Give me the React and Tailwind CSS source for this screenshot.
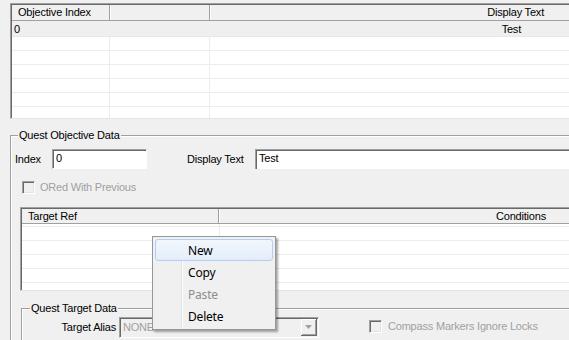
import React from 'react'

const sans = { fontFamily: '"Liberation Sans", Arial, sans-serif' }

function Checkbox() {
  return (
    <div className="w-[13px] h-[13px] shrink-0 border-t border-l border-t-[#a0a0a0] border-l-[#a0a0a0] border-b border-r border-b-white border-r-white shadow-[inset_1px_1px_0_#696969,inset_-1px_-1px_0_#e3e3e3] bg-[#f0f0f0]" />
  )
}

function TopList() {
  const rows = [0, 1, 2, 3, 4]
  return (
    <div className="ml-[10px] mt-[3px] h-[116px] w-[640px] border-t border-l border-t-[#a0a0a0] border-l-[#a0a0a0] border-b border-b-[#e3e3e3] shadow-[inset_1px_1px_0_#696969] bg-white flex flex-col pt-[1px] pl-[1px]">
      <div className="h-[16px] shrink-0 flex bg-[#f0f0f0] border-b border-b-[#a0a0a0]">
        <div className="w-[98px] shrink-0 pl-[6px] leading-[15px] border-r border-r-[#a0a0a0] shadow-[1px_0_0_#fff]">Objective Index</div>
        <div className="w-[100px] shrink-0 border-r border-r-[#a0a0a0] shadow-[1px_0_0_#fff]" />
        <div className="w-[334px] shrink-0 text-right leading-[15px]">Display Text</div>
      </div>
      <div className="h-[16px] shrink-0 flex bg-[#efefef] border-b border-b-[#e8e8e8] leading-[16px]">
        <div className="w-[98px] shrink-0 pl-[2px]">0</div>
        <div className="w-[100px] shrink-0" />
        <div className="w-[311px] shrink-0 text-right">Test</div>
      </div>
      {rows.map(r => (
        <div key={r} className="h-[14px] shrink-0 flex border-b border-b-[#ececec]">
          <div className="w-[98px] shrink-0 border-r border-r-[#ececec]" />
          <div className="w-[100px] shrink-0 border-r border-r-[#ececec]" />
          <div className="flex-1" />
        </div>
      ))}
      <div className="flex-1 flex">
        <div className="w-[98px] shrink-0 border-r border-r-[#ececec]" />
        <div className="w-[100px] shrink-0 border-r border-r-[#ececec]" />
      </div>
    </div>
  )
}

function TargetList() {
  return (
    <div className="ml-[9px] mt-[13px] h-[84px] w-[600px] border-t border-l border-t-[#a0a0a0] border-l-[#a0a0a0] border-b border-b-[#e3e3e3] shadow-[inset_1px_1px_0_#696969] bg-white flex flex-col pt-[1px] pl-[1px]">
      <div className="h-[15px] shrink-0 flex bg-[#f0f0f0] border-b border-b-[#a0a0a0]">
        <div className="w-[197px] shrink-0 pl-[6px] leading-[14px] border-r border-r-[#a0a0a0] shadow-[1px_0_0_#fff]">Target Ref</div>
        <div className="w-[327px] shrink-0 text-right leading-[14px]">Conditions</div>
      </div>
      <div className="h-[3px] shrink-0 flex border-b border-b-[#ececec]">
        <div className="w-[198px] shrink-0 border-r border-r-[#ececec]" />
      </div>
      {[0, 1, 2, 3].map(r => (
        <div key={r} className="h-[14px] shrink-0 flex border-b border-b-[#ececec]">
          <div className="w-[198px] shrink-0 border-r border-r-[#ececec]" />
        </div>
      ))}
      <div className="flex-1 flex">
        <div className="w-[198px] shrink-0 border-r border-r-[#ececec]" />
      </div>
    </div>
  )
}

function ContextMenu() {
  const items = [
    { label: 'New', active: true },
    { label: 'Copy' },
    { label: 'Paste', disabled: true },
    { label: 'Delete' },
  ]
  return (
    <div
      className="absolute left-[152px] top-[236px] w-[124px] h-[94px] bg-[#f0f0f0] border border-[#979797] shadow-[2px_2px_2px_rgba(0,0,0,0.35)] px-[2px] pt-[2px]"
      style={{ fontFamily: '"Noto Sans", "Open Sans", sans-serif' }}
    >
      <div className="absolute left-[28px] top-[2px] bottom-[2px] w-[2px] border-l border-l-[#e2e3e3] border-r border-r-white" />
      {items.map(it => (
        <div
          key={it.label}
          className={
            'relative h-[22px] leading-[21px] pl-[32px] text-[12px] rounded-[3px] border ' +
            (it.active
              ? 'border-[#aecff7] bg-gradient-to-b from-[#f2f7fd] to-[#e3edf9]'
              : 'border-transparent') +
            (it.disabled ? ' text-[#8d8d8d]' : ' text-black')
          }
        >
          {it.label}
        </div>
      ))}
    </div>
  )
}

export default function App() {
  return (
    <div className="relative w-[569px] h-[340px] overflow-hidden bg-[#f0f0f0] text-[11px] tracking-[-0.2px] text-black" style={sans}>
      <TopList />

      {/* Quest Objective Data */}
      <div className="relative ml-[10px] mt-[16px] h-[300px] border-t border-l border-t-[#a0a0a0] border-l-[#a0a0a0] shadow-[inset_1px_1px_0_#fff]">
        <span className="absolute -top-[8px] left-[7px] px-[1px] bg-[#f0f0f0] leading-[14px]">Quest Objective Data</span>

        <div className="mt-[13px] h-[20px] flex items-center">
          <span className="w-[41px] shrink-0 pl-[4px]">Index</span>
          <div className="w-[95px] h-[20px] shrink-0 bg-white border-t border-l border-t-[#a0a0a0] border-l-[#a0a0a0] border-b border-r border-b-white border-r-white shadow-[inset_1px_1px_0_#696969] pl-[3px] leading-[17px]">0</div>
          <span className="ml-[40px] w-[68px] shrink-0 whitespace-nowrap">Display Text</span>
          <div className="w-[400px] h-[20px] shrink-0 bg-white border-t border-l border-t-[#a0a0a0] border-l-[#a0a0a0] shadow-[inset_1px_1px_0_#696969] pl-[3px] leading-[17px]">Test</div>
        </div>

        <div className="mt-[12px] ml-[11px] flex items-center gap-[5px] text-[#a0a0a0]">
          <Checkbox />
          <span className="leading-[13px]">ORed With Previous</span>
        </div>

        <TargetList />

        {/* Quest Target Data */}
        <div className="relative ml-[10px] mt-[17px] h-[60px] border-t border-l border-t-[#a0a0a0] border-l-[#a0a0a0] shadow-[inset_1px_1px_0_#fff]">
          <span className="absolute -top-[8px] left-[8px] px-[1px] bg-[#f0f0f0] leading-[14px]">Quest Target Data</span>
          <div className="mt-[8px] flex items-start">
            <span className="w-[97px] shrink-0 pr-[3px] text-right leading-[21px]">Target Alias</span>
            <div className="w-[200px] h-[21px] shrink-0 flex items-center justify-between border-t border-l border-t-[#a0a0a0] border-l-[#a0a0a0] border-b border-r border-b-white border-r-white shadow-[inset_1px_1px_0_#696969] bg-[#f0f0f0] pl-[3px] pr-[1px]">
              <span className="text-[#a0a0a0]">NONE</span>
              <div className="w-[16px] h-[17px] flex items-center justify-center border-r border-b border-r-[#696969] border-b-[#696969] shadow-[inset_1px_1px_0_#fff,inset_-1px_-1px_0_#a0a0a0] bg-[#f0f0f0]">
                <svg width="7" height="4" viewBox="0 0 7 4"><path d="M0 0h7L3.5 4z" fill="#a0a0a0" /></svg>
              </div>
            </div>
            <div className="ml-[50px] mt-[3px] shrink-0 flex items-center gap-[6px] text-[#a0a0a0] whitespace-nowrap">
              <Checkbox />
              <span className="leading-[13px]">Compass Markers Ignore Locks</span>
            </div>
          </div>
        </div>
      </div>

      <ContextMenu />
    </div>
  )
}
